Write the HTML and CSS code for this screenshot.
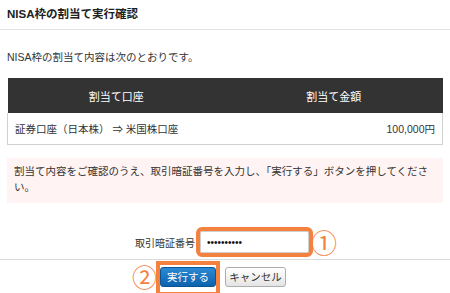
FILE: index.html
```html
<!DOCTYPE html>
<html lang="ja">
<head>
<meta charset="utf-8">
<title>NISA枠の割当て実行確認</title>
<link rel="stylesheet" href="styles.css">
</head>
<body>
<div class="page">
  <header class="title">NISA枠の割当て実行確認</header>
  <main class="content">
    <p class="intro">NISA枠の割当て内容は次のとおりです。</p>
    <table class="alloc">
      <thead>
        <tr><th>割当て口座</th><th>割当て金額</th></tr>
      </thead>
      <tbody>
        <tr><td>証券口座（日本株） ⇒ 米国株口座</td><td class="amt">100,000円</td></tr>
      </tbody>
    </table>
    <div class="notice">割当て内容をご確認のうえ、取引暗証番号を入力し、「実行する」ボタンを押してください。</div>
    <div class="pin-row">
      <label class="pin-label" for="pin">取引暗証番号</label>
      <span class="pin-wrap">
        <input class="pin-input" id="pin" type="password" value="1234567890" readonly>
        <span class="num num1">①</span>
      </span>
    </div>
  </main>
  <div class="actions">
    <span class="step">②</span>
    <span class="exec-wrap">
      <button class="btn btn-primary" type="button">実行する</button>
      <span class="hl"></span>
    </span>
    <button class="btn btn-cancel" type="button">キャンセル</button>
  </div>
</div>
</body>
</html>
```
FILE: styles.css
```css
html, body {
  margin: 0;
  padding: 0;
  background: #fff;
}
body {
  font-family: "Liberation Sans", "Noto Sans CJK JP", sans-serif;
  font-size: 10.5px;
  color: #333;
}
.page {
  width: 450px;
  height: 293px;
  overflow: hidden;
}
.title {
  height: 29px;
  line-height: 29px;
  padding-left: 7px;
  font-size: 11.5px;
  font-weight: bold;
  color: #222;
  border-bottom: 1px solid #e3e3e3;
}
.content {
  padding: 0 7px;
}
.intro {
  margin: 19px 0 0;
  line-height: 16px;
}
.alloc {
  width: 436px;
  margin-top: 13px;
  border-collapse: collapse;
  table-layout: fixed;
}
.alloc th {
  height: 35px;
  padding: 0;
  background: #333;
  color: #fff;
  font-size: 11px;
  font-weight: normal;
  text-align: center;
}
.alloc td {
  height: 31px;
  padding: 0 7px;
  border-bottom: 1px solid #d0d0d0;
  text-align: left;
}
.alloc td:first-child {
  border-left: 1px solid #d0d0d0;
}
.alloc td:last-child {
  border-right: 1px solid #d0d0d0;
}
.alloc td.amt {
  text-align: right;
}
.notice {
  margin-top: 13px;
  padding: 5px 14px 8px 7px;
  line-height: 16px;
  background: #fff3f3;
}
.pin-row {
  display: flex;
  align-items: center;
  justify-content: center;
  gap: 5px;
  margin-top: 28px;
  padding-bottom: 6px;
  padding-right: 6px;
}
.pin-label {
  font-size: 10px;
  color: #333;
}
.pin-wrap {
  position: relative;
  display: flex;
}
.pin-input {
  box-sizing: border-box;
  width: 109px;
  height: 22px;
  margin: 0;
  padding: 0 6px;
  border: 1px solid #cfcfcf;
  border-radius: 2px;
  font-family: "Liberation Sans", sans-serif;
  font-size: 10px;
  color: #111;
  background: #fff;
  outline: 4px solid #f5813f;
  outline-offset: 0;
}
.num {
  position: absolute;
  font-family: "Noto Sans CJK JP", sans-serif;
  font-size: 26px;
  line-height: 34px;
  color: #f5813f;
  white-space: nowrap;
}
.num1 {
  left: 111px;
  top: -6px;
}
.actions {
  display: flex;
  align-items: center;
  justify-content: center;
  height: 34px;
  padding-top: 0;
  padding-right: 32px;
  border-top: 1px solid #dcdcdc;
}
.step {
  margin-right: 3px;
  margin-top: -2px;
  font-family: "Noto Sans CJK JP", sans-serif;
  font-size: 25px;
  line-height: 34px;
  color: #f5813f;
  white-space: nowrap;
}
.exec-wrap {
  position: relative;
  display: flex;
  margin-right: 9px;
}
.btn {
  box-sizing: border-box;
  height: 20px;
  margin: 0;
  padding: 0;
  border-radius: 3px;
  white-space: nowrap;
  font-family: "Liberation Sans", "Noto Sans CJK JP", sans-serif;
  font-size: 10.5px;
  line-height: 18px;
}
.btn-primary {
  width: 56px;
  color: #fff;
  border: 1px solid #0a5596;
  background: linear-gradient(#2c89d4, #0c62ae);
}
.btn-cancel {
  width: 61px;
  color: #333;
  border: 1px solid #adadad;
  background: linear-gradient(#ffffff, #e4e4e4);
}
.hl {
  position: absolute;
  left: -4px;
  right: -4px;
  top: -6px;
  bottom: -9px;
  border: 4px solid #f5813f;
  pointer-events: none;
}
```
